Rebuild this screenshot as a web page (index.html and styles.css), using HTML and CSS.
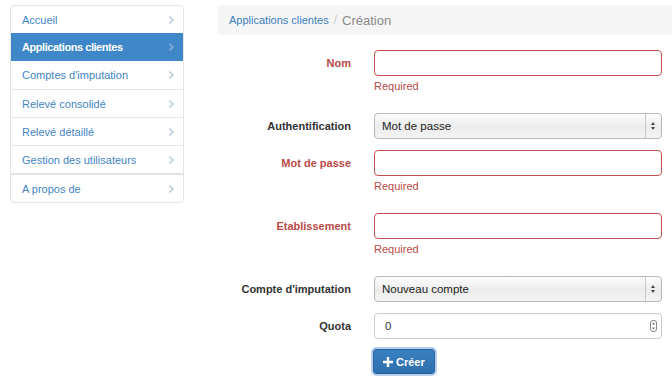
FILE: index.html
```html
<!DOCTYPE html>
<html lang="fr">
<head>
  <meta charset="UTF-8" />
  <title>Applications clientes - Création</title>
  <link rel="stylesheet" href="styles.css">
</head>
<body>
  <div class="page">
    <ul class="side-nav">
      <li><a href="#">Accueil</a></li>
      <li class="active"><a href="#">Applications clientes</a></li>
      <li><a href="#">Comptes d'imputation</a></li>
      <li><a href="#">Relevé consolidé</a></li>
      <li><a href="#">Relevé détaillé</a></li>
      <li><a href="#">Gestion des utilisateurs</a></li>
      <li class="divided"><a href="#">A propos de</a></li>
    </ul>

    <div class="content">
      <div class="breadcrumb">
        <a href="#">Applications clientes</a>
        <span class="sep">/</span>
        <span class="current">Création</span>
      </div>

      <form class="form-horizontal">
        <div class="group error">
          <label for="nom">Nom</label>
          <div class="controls">
            <input type="text" id="nom">
            <div class="help">Required</div>
          </div>
        </div>

        <div class="group">
          <label for="auth">Authentification</label>
          <div class="controls">
            <div class="fake-select" id="auth">Mot de passe<span class="arrows"></span></div>
          </div>
        </div>

        <div class="group error">
          <label for="mdp">Mot de passe</label>
          <div class="controls">
            <input type="text" id="mdp">
            <div class="help">Required</div>
          </div>
        </div>

        <div class="group error">
          <label for="etab">Etablissement</label>
          <div class="controls">
            <input type="text" id="etab">
            <div class="help">Required</div>
          </div>
        </div>

        <div class="group">
          <label for="compte">Compte d'imputation</label>
          <div class="controls">
            <div class="fake-select" id="compte">Nouveau compte<span class="arrows"></span></div>
          </div>
        </div>

        <div class="group">
          <label for="quota">Quota</label>
          <div class="controls">
            <div class="number-input" id="quota">0
              <svg class="spin" width="7" height="12" viewBox="0 0 7 12">
                <rect x="0.5" y="0.5" width="6" height="11" rx="2.5" fill="#fff" stroke="#888"/>
                <path d="M3.5 2.5 L5 4.6 H2 Z M3.5 9.5 L5 7.4 H2 Z" fill="#666"/>
              </svg>
            </div>
          </div>
        </div>

        <div class="group">
          <span class="label-spacer"></span>
          <div class="controls">
            <button type="button" class="btn-primary">
              <svg width="10" height="10" viewBox="0 0 10 10"><path d="M3.8 0 H6.2 V3.8 H10 V6.2 H6.2 V10 H3.8 V6.2 H0 V3.8 H3.8 Z" fill="#fff"/></svg>
              Créer
            </button>
          </div>
        </div>
      </form>
    </div>
  </div>
</body>
</html>
```

FILE: styles.css
```css
body { margin: 0; font-family: "Liberation Sans", Arial, sans-serif; font-size: 11px; color: #333; background: #fff; overflow: hidden; }
.page { display: flex; align-items: flex-start; padding: 5px 0 0 10px; }

.side-nav { list-style: none; margin: 0; padding: 0; width: 172px; border: 1px solid #e5e5e5; border-radius: 4px; flex: none; }
.side-nav li { border-top: 1px solid #e5e5e5; }
.side-nav li:first-child { border-top: none; }
.side-nav li.divided { border-top: 2px solid #e2e2e2; }
.side-nav a { display: flex; align-items: center; justify-content: space-between; height: 27px; padding: 0 6px 0 11px; color: #4285c4; text-decoration: none; }
.side-nav a::after { content: ""; width: 4px; height: 4px; border-top: 2.5px solid #cad6e2; border-right: 2.5px solid #cad6e2; transform: rotate(45deg); margin-right: 4px; }
.side-nav li.active { border-top: none; }
.side-nav li.active a { height: 28px; background: #3f87c9; color: #fff; font-weight: bold; letter-spacing: -0.45px; }
.side-nav li.active a::after { border-color: #76a6d6; }
.side-nav li.active + li { border-top: none; }
.side-nav li.active + li a { height: 28px; }

.content { flex: none; width: 480px; margin-left: 34px; }
.breadcrumb { height: 30px; display: flex; align-items: center; padding-left: 11px; background: #f5f5f5; border-radius: 4px; }
.breadcrumb a { color: #3a7fc1; text-decoration: none; }
.breadcrumb .sep { color: #ccc; padding: 0 5px; font-size: 12px; }
.breadcrumb .current { color: #8a8a8a; font-size: 13px; }

.form-horizontal { margin-top: 15px; width: 444px; }
.group { display: flex; align-items: flex-start; margin-bottom: 11px; }
.group label, .label-spacer { width: 133px; flex: none; text-align: right; font-weight: bold; line-height: 26px; margin-right: 23px; }
.controls { flex: 1; }
.group input { display: block; box-sizing: border-box; width: 288px; height: 26px; margin: 0; border: 1px solid #ccc; border-radius: 4px; font: inherit; padding: 0 8px; }
.group.error label { color: #b94a48; }
.group.error input { border-color: #c0504d; }
.help { color: #b94a48; line-height: 16px; margin: 2px 0 8px; }

.fake-select { position: relative; box-sizing: border-box; width: 288px; height: 26px; line-height: 24px; padding-left: 7px; border: 1px solid #b8b8b8; border-radius: 4px; background: linear-gradient(#fcfcfc, #ececec 55%, #f4f4f4); color: #222; font-size: 11.5px; }
.fake-select .arrows { position: absolute; top: 0; right: 0; width: 15px; height: 24px; border-left: 1px solid #c8c8c8; }
.fake-select .arrows::before, .fake-select .arrows::after { content: ""; position: absolute; left: 5px; border-left: 2.5px solid transparent; border-right: 2.5px solid transparent; }
.fake-select .arrows::before { top: 8px; border-bottom: 3px solid #444; }
.fake-select .arrows::after { top: 13px; border-top: 3px solid #444; }

.number-input { position: relative; box-sizing: border-box; width: 288px; height: 26px; line-height: 24px; padding-left: 10px; border: 1px solid #ccc; border-radius: 4px; color: #333; font-size: 11.5px; }
.number-input .spin { position: absolute; right: 4px; top: 6px; }

.btn-primary { display: flex; align-items: center; gap: 3px; height: 25px; margin: -1px 0 0 -1px; padding: 0 9px; border: 1px solid #28619a; border-radius: 3px; background: linear-gradient(#3a80c0, #2f6fad); color: #fff; font: bold 11px "Liberation Sans", Arial, sans-serif; box-shadow: 0 0 0 2px #b7d3f1; cursor: pointer; }
```
